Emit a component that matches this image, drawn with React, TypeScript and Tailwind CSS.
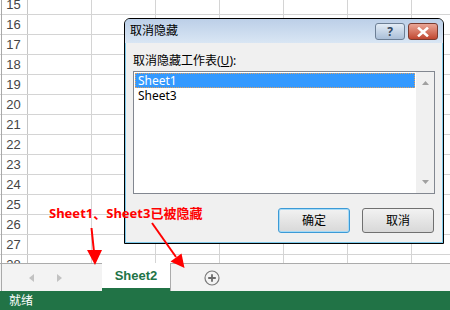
import React from 'react'

const rows = [15, 16, 17, 18, 19, 20, 21, 22, 23, 24, 25, 26, 27, 28]
const cols = [0, 1, 2, 3, 4, 5, 6]

const ui = { fontFamily: '"Noto Sans", "Noto Sans CJK SC", sans-serif' }

function Grid() {
  return (
    <div className="relative h-[263px] overflow-hidden bg-white">
      <div className="-mt-[5px]">
        {rows.map((r) => (
          <div key={r} className="flex h-[20px] border-b border-[#d4d4d4]">
            <div
              className="w-[28px] shrink-0 border-r border-[#c6c6c6] text-center text-[13px] leading-[19px] text-[#444]"
              style={{ fontFamily: '"Liberation Sans", sans-serif' }}
            >
              {r}
            </div>
            {cols.map((c) => (
              <div key={c} className="w-[64px] shrink-0 border-r border-[#d4d4d4]" />
            ))}
          </div>
        ))}
      </div>
      <div className="absolute left-[1px] top-0 h-full w-px bg-[#a9a9a9]" />
    </div>
  )
}

function Dialog() {
  return (
    <div
      className="absolute left-[124px] top-[18px] flex h-[226px] w-[320px] flex-col rounded-t-[6px] border border-black bg-[#f0f0f0] shadow-[1px_1px_0_#7fcbec_inset,-1px_-1px_0_#7fcbec_inset]"
      style={ui}
    >
      <div className="flex h-[24px] items-center justify-between rounded-t-[5px] bg-gradient-to-b from-[#bccfe8] to-[#d9e6f4] pl-[5px] pr-[5px]">
        <span className="text-[12px] leading-none text-black">取消隐藏</span>
        <div className="flex gap-[3px] pt-[1px]">
          <div className="flex h-[17px] w-[30px] items-center justify-center rounded-[3px] border border-[#6d7f95] bg-gradient-to-b from-[#e3ecf6] to-[#aabfd8] text-[12px] font-bold leading-none text-[#33475e]">
            ?
          </div>
          <div className="flex h-[17px] w-[30px] items-center justify-center rounded-[3px] border border-[#7a3b30] bg-gradient-to-b from-[#e9a596] to-[#c04630]">
            <svg width="12" height="10" viewBox="0 0 12 10">
              <path d="M2 1.5 L10 8.5 M10 1.5 L2 8.5" stroke="#fff" strokeWidth="2.6" strokeLinecap="square" />
            </svg>
          </div>
        </div>
      </div>
      <div className="flex flex-1 flex-col px-[8px] pb-[10px]">
        <div className="mt-[11px] text-[12px] leading-[14px] text-black">
          取消隐藏工作表(<span className="underline">U</span>):
        </div>
        <div className="mt-[3px] flex h-[123px] w-[302px] border border-[#828790] bg-white">
          <div className="flex-1 p-[1px]">
            <div className="h-[15px] border border-dotted border-[#e0a060] bg-[#3399ff] pl-[2px] text-[12px] leading-[13px] text-white">
              Sheet1
            </div>
            <div className="h-[15px] pl-[3px] text-[12px] leading-[15px] text-black">Sheet3</div>
          </div>
          <div className="flex w-[18px] flex-col items-center justify-between bg-[#f0f0f0] py-[9px]">
            <svg width="7" height="4" viewBox="0 0 7 4">
              <path d="M0 4 L3.5 0 L7 4 Z" fill="#a0a0a0" />
            </svg>
            <svg width="7" height="4" viewBox="0 0 7 4">
              <path d="M0 0 L3.5 4 L7 0 Z" fill="#a0a0a0" />
            </svg>
          </div>
        </div>
        <div className="mt-[14px] flex justify-end gap-[12px] pr-[1px]">
          <div className="flex h-[25px] w-[72px] items-center justify-center rounded-[3px] border border-[#3c9ad6] bg-gradient-to-b from-[#f2f2f2] to-[#d8d8d8] text-[12px] text-black shadow-[0_0_0_1px_#a6daf6_inset]">
            确定
          </div>
          <div className="flex h-[25px] w-[72px] items-center justify-center rounded-[3px] border border-[#707070] bg-gradient-to-b from-[#f2f2f2] to-[#d8d8d8] text-[12px] text-black">
            取消
          </div>
        </div>
      </div>
    </div>
  )
}

function TabBar() {
  return (
    <div className="relative flex h-[28px] bg-[#f3f3f3]">
      <div className="flex w-[102px] items-center border-t border-[#ababab] border-l-[#a9a9a9] pl-[29px]">
        <svg width="5" height="8" viewBox="0 0 5 8">
          <path d="M5 0 L0 4 L5 8 Z" fill="#c2c2c2" />
        </svg>
        <svg width="5" height="8" viewBox="0 0 5 8" className="ml-[23px]">
          <path d="M0 0 L5 4 L0 8 Z" fill="#c2c2c2" />
        </svg>
      </div>
      <div className="flex w-[69px] flex-col border-r border-[#ababab] bg-white">
        <div
          className="flex flex-1 items-center justify-center text-[13px] font-bold text-[#217346]"
          style={{ fontFamily: '"Liberation Sans", sans-serif' }}
        >
          Sheet2
        </div>
        <div className="h-[3px] bg-[#217346]" />
      </div>
      <div className="flex flex-1 items-center border-t border-[#ababab] pl-[33px]">
        <svg width="16" height="16" viewBox="0 0 16 16">
          <circle cx="8" cy="8" r="7" fill="none" stroke="#7a7a7a" strokeWidth="1.2" />
          <path d="M8 4.2 V11.8 M4.2 8 H11.8" stroke="#6a6a6a" strokeWidth="1.8" />
        </svg>
      </div>
      <div className="absolute left-[1px] top-0 h-full w-px bg-[#a9a9a9]" />
    </div>
  )
}

function Annotation() {
  return (
    <>
      <div
        className="absolute left-[49px] top-[203px] text-[13px] font-bold leading-[20px] text-[#ff0000]"
        style={ui}
      >
        Sheet1、Sheet3已被隐藏
      </div>
      <svg className="pointer-events-none absolute left-0 top-0" width="450" height="310">
        <path d="M91.5 228 L94 252" stroke="#ff0000" strokeWidth="2" />
        <path d="M87 250 L102 250 L95 265 Z" fill="#ff0000" />
        <path d="M152 223 L176 257" stroke="#ff0000" strokeWidth="2" />
        <path d="M170.5 261.5 L181.5 253.5 L184.5 268 Z" fill="#ff0000" />
      </svg>
    </>
  )
}

export default function App() {
  return (
    <div className="relative h-[310px] w-[450px] overflow-hidden bg-white">
      <Grid />
      <TabBar />
      <div className="flex h-[19px] items-center bg-[#217346] pl-[9px] text-[12px] text-white" style={ui}>
        就绪
      </div>
      <Dialog />
      <Annotation />
    </div>
  )
}
